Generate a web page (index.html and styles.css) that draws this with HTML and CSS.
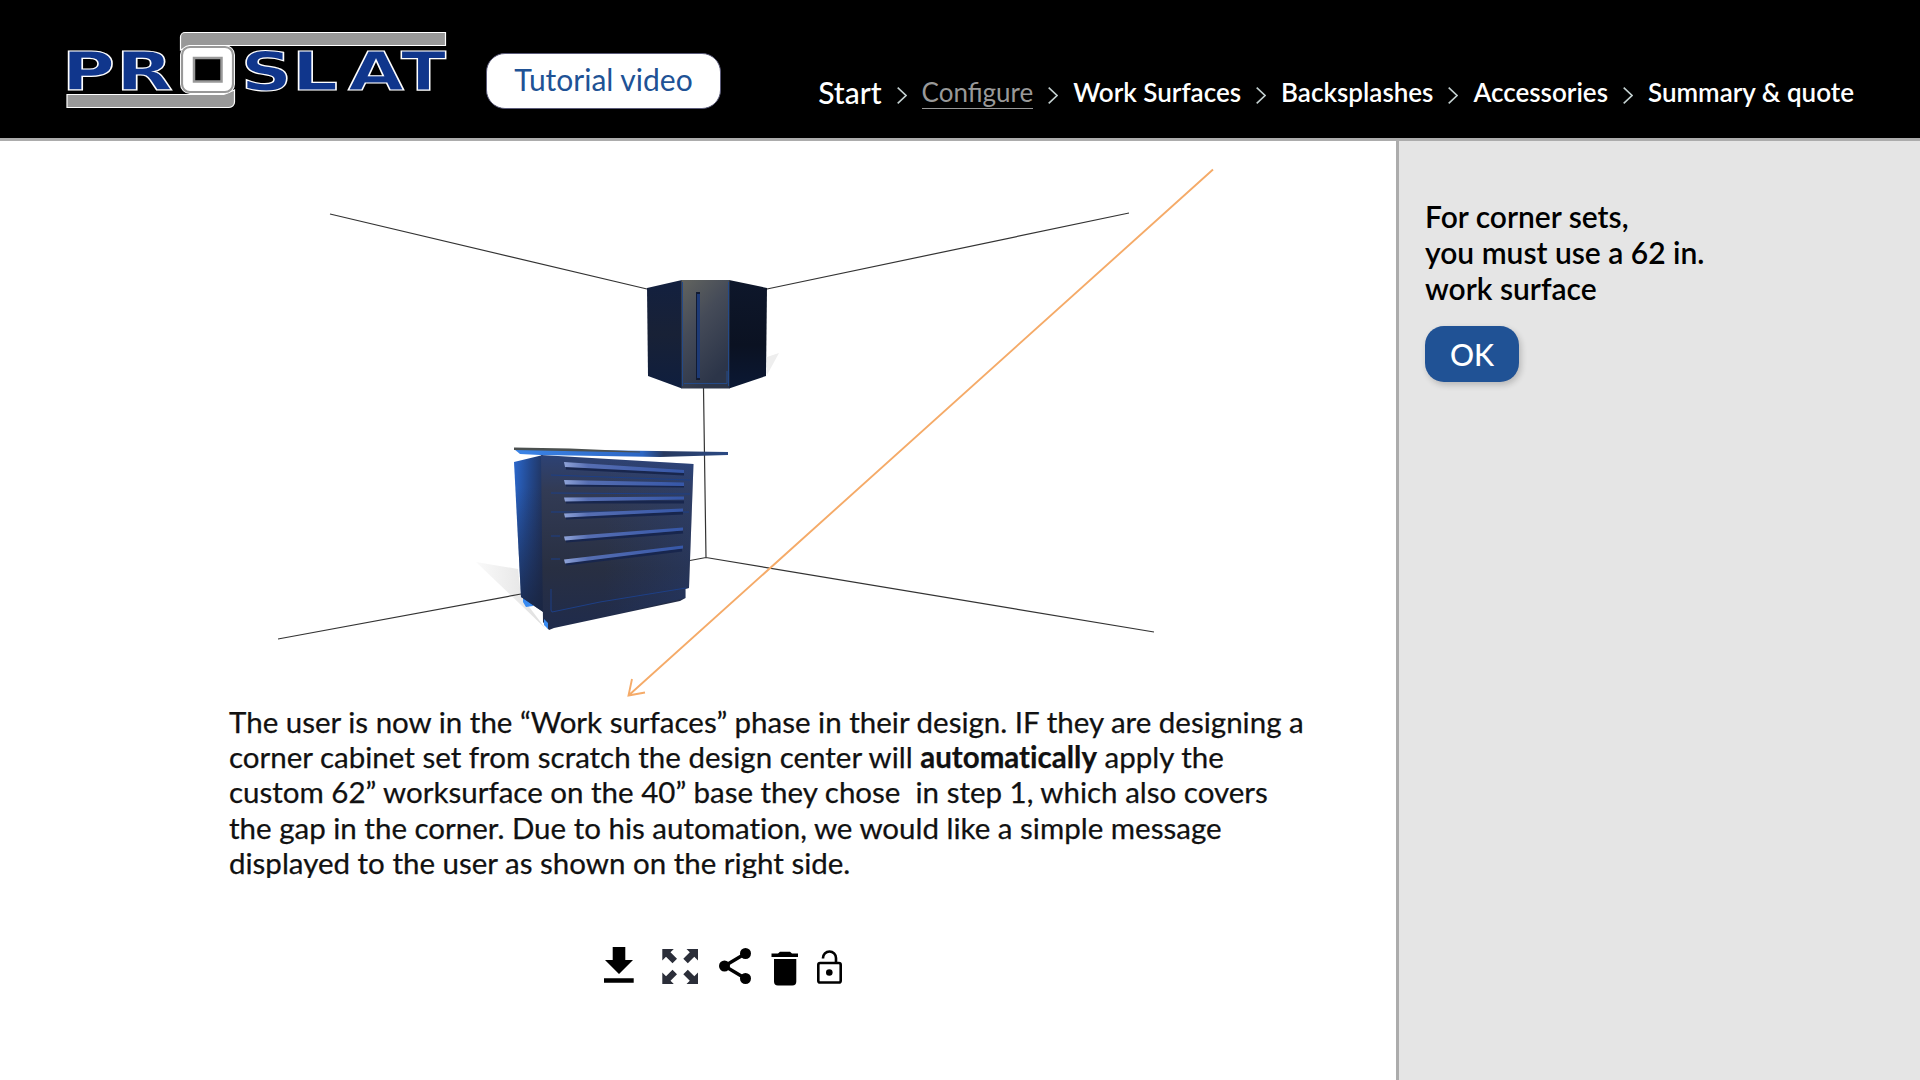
FILE: index.html
```html
<!DOCTYPE html>
<html lang="en">
<head>
<meta charset="utf-8">
<title>Proslat design center</title>
<link rel="stylesheet" href="styles.css">
</head>
<body>
<header class="header">
  <svg class="logo" viewBox="64 28 386 84" width="386" height="84" aria-label="Proslat">
    <g class="logo-bar">
      <path d="M180.500 50V37a4.500 4.500 0 0 1 4.500-4.500H445.500V45.500H190Z"/>
      <path d="M67 94.500H224L234.500 90V102a5.500 5.500 0 0 1-5.500 5.500H67Z"/>
    </g>
    <g class="logo-letters">
      <text x="62" y="90" textLength="53" lengthAdjust="spacingAndGlyphs">P</text>
      <text x="116" y="90" textLength="57" lengthAdjust="spacingAndGlyphs">R</text>
      <text x="241" y="90" textLength="51" lengthAdjust="spacingAndGlyphs">S</text>
      <text x="292" y="90" textLength="46" lengthAdjust="spacingAndGlyphs">L</text>
      <text x="348" y="90" textLength="56" lengthAdjust="spacingAndGlyphs">A</text>
      <text x="401" y="90" textLength="45" lengthAdjust="spacingAndGlyphs">T</text>
    </g>
    <rect class="logo-edge" x="180" y="45" width="55" height="49" rx="10"/>
    <rect class="logo-ring" x="182" y="47" width="51" height="45" rx="8"/>
    <rect class="logo-hole" x="194" y="58" width="27.500" height="23.500"/>
  </svg>
  <a class="tutorial">Tutorial video</a>
  <nav class="steps">
    <a class="step start">Start</a>
    <svg class="chev" viewBox="0 0 10 17"><path d="M.7.7 9 8.500.7 16.300"/></svg>
    <a class="step current">Configure</a>
    <svg class="chev" viewBox="0 0 10 17"><path d="M.7.7 9 8.500.7 16.300"/></svg>
    <a class="step">Work Surfaces</a>
    <svg class="chev" viewBox="0 0 10 17"><path d="M.7.7 9 8.500.7 16.300"/></svg>
    <a class="step">Backsplashes</a>
    <svg class="chev" viewBox="0 0 10 17"><path d="M.7.7 9 8.500.7 16.300"/></svg>
    <a class="step">Accessories</a>
    <svg class="chev" viewBox="0 0 10 17"><path d="M.7.7 9 8.500.7 16.300"/></svg>
    <a class="step">Summary &amp; quote</a>
  </nav>
</header>
<div class="body">
  <main class="stage">
    <svg class="scene" viewBox="0 141 1396 563" width="1396" height="563">
      <defs>
        <linearGradient id="side" x1="0" y1="0" x2="1" y2=".25"><stop offset="0" stop-color="#2b68cd"/><stop offset=".45" stop-color="#23498f"/><stop offset="1" stop-color="#202a48"/></linearGradient>
        <linearGradient id="sideShade" x1="0" y1="0" x2="0" y2="1"><stop offset=".2" stop-color="#1c2a50" stop-opacity="0"/><stop offset="1" stop-color="#182440" stop-opacity=".85"/></linearGradient>
        <linearGradient id="front" x1="0" y1="0" x2="0" y2="1"><stop offset="0" stop-color="#2d4275"/><stop offset=".2" stop-color="#323b55"/><stop offset=".65" stop-color="#282f42"/><stop offset="1" stop-color="#1f2b4c"/></linearGradient>
        <linearGradient id="frontBlue" x1="0" y1="0" x2="1" y2="0"><stop offset=".4" stop-color="#24489a" stop-opacity="0"/><stop offset="1" stop-color="#24489a" stop-opacity=".25"/></linearGradient>
        <linearGradient id="top" x1="0" y1="0" x2="1" y2="0"><stop offset="0" stop-color="#3c85e8"/><stop offset=".6" stop-color="#2c66c4"/><stop offset=".7" stop-color="#27395f"/><stop offset="1" stop-color="#2b4983"/></linearGradient>
        <linearGradient id="bar" x1="0" y1="0" x2="1" y2="0"><stop offset="0" stop-color="#8fa3d8"/><stop offset=".2" stop-color="#566eb2"/><stop offset="1" stop-color="#3657a8"/></linearGradient>
        <linearGradient id="door" x1="0" y1="0" x2=".5" y2="1"><stop offset="0" stop-color="#62645f"/><stop offset=".45" stop-color="#454b58"/><stop offset="1" stop-color="#2c3549"/></linearGradient>
        <linearGradient id="wallL" x1="0" y1="0" x2="0" y2="1"><stop offset="0" stop-color="#13203f"/><stop offset=".5" stop-color="#182136"/><stop offset="1" stop-color="#0f1e3e"/></linearGradient>
        <linearGradient id="wallR" x1="0" y1="0" x2="0" y2="1"><stop offset="0" stop-color="#0e172b"/><stop offset=".6" stop-color="#0b1222"/><stop offset="1" stop-color="#0b1834"/></linearGradient>
        <linearGradient id="shade" x1="1" y1="0" x2="0" y2="0"><stop offset="0" stop-color="#dedede"/><stop offset="1" stop-color="#fafafa"/></linearGradient>
      </defs>
      <path fill="url(#shade)" d="M476 562 518 569 521 596 545 628Z"/>
      <path fill="#eee" d="M767 357 779 353 767 375Z"/>
      <path class="room" d="M330 214 647 289M767 289 1129 213M703.500 388 706 557.500M690 560.500 706 557.500 1154 632M278 639 521 594"/>
      <g>
        <path fill="#388af0" d="M523 597l10 3v6l-7 1-3-5Z"/>
        <path fill="url(#side)" d="M514 462 543 455 549 616 521 597Z"/>
        <path fill="url(#sideShade)" d="M514 462 543 455 549 616 521 597Z"/>
        <path fill="url(#front)" d="M541 455 693.500 464 689 588 685.500 589V598L680 601 554 628 549 630 543 622Z"/>
        <path fill="url(#frontBlue)" d="M543 455 693.500 464 689 588 685.500 589V598L554 628Z"/>
        <path fill="#388af0" d="M544 619l4 4v6l-4-4Z"/>
        <path class="seam" d="M551 475 690 480M551 493 690 494M551 512H689M551 536H560M551 559H560M551 589V610L552 612 600 602 686 588"/>
        <path class="drop" d="M566 468 684 474M566 485 684 486M566 502H684M566 518 683 513M566 541 683 532M566 564 682 550"/>
        <g fill="url(#bar)">
          <path d="M564 462 684 470V473L565 467Z"/>
          <path d="M564 480 684 482.500V486L565 484.500Z"/>
          <path d="M564 497.500 684 496.500V499.500L565 501.500Z"/>
          <path d="M564 513.500 683 508.500V511.500L565 517.500Z"/>
          <path d="M564 536.500 683 527.500V530.500L565 540.500Z"/>
          <path d="M564 559.500 683 545.500V548.500L565 563.500Z"/>
        </g>
        <path fill="url(#top)" d="M514 449 728 452V455L660 457 540 455 520 454Z"/>
        <path fill="#4b504f" d="M514 447.500 570 448.500 640 451.500 640 452.500 514 450Z"/>
      </g>
      <g>
        <path fill="url(#wallL)" d="M647 288 682 280V388.500L648 376Z"/>
        <path fill="url(#wallR)" d="M729 280 767 288 766 376 729 388.500Z"/>
        <path fill="url(#door)" d="M681.500 280H729.500V388.500H681.500Z"/>
        <path fill="none" stroke="#244a88" stroke-width="1" d="M682.500 282V386M728.500 282V386M684 383.500H727V371"/>
        <path fill="#111b33" d="M696 292h4v88h-4Z"/>
        <path fill="#1d3a76" d="M697 294h3v84h-3Z"/>
      </g>
      <path class="arrow" d="M1213 169.500 628.500 695.500M632 679 628.500 695.500 645 692.500"/>
    </svg>
    <div class="note">
      <p>The user is now in the “Work surfaces” phase in their design. IF they are designing a<br>
      corner cabinet set from scratch the design center will <b>automatically</b> apply the<br>
      custom 62” worksurface on the 40” base they chose&nbsp; in step 1, which also covers<br>
      the gap in the corner. Due to his automation, we would like a simple message<br>
      displayed to the user as shown on the right side.</p>
    </div>
    <div class="tools">
      <svg class="download" viewBox="604 946 31 38" width="31" height="38"><path d="M612.700 947h12.600v13H633l-14 14-14-14h7.700ZM604 978.300h29.700v4.500H604Z"/></svg>
      <svg class="expand" viewBox="662 948 36 37" width="36" height="37"><path d="M662.300 949h11.500l-3.300 3.300 6.500 6.500-4.500 4.500-6.500-6.500-3.700 3.700ZM698 949h-11.500l3.300 3.300-6.500 6.500 4.500 4.500 6.500-6.500 3.700 3.700ZM662.300 984h11.500l-3.300-3.300 6.500-6.500-4.500-4.500-6.500 6.500-3.700-3.700ZM698 984h-11.500l3.300-3.300-6.500-6.500 4.500-4.500 6.500 6.500 3.700-3.700Z"/></svg>
      <svg class="share" viewBox="718 947 34 38" width="34" height="38"><path fill="none" stroke="#000" stroke-width="3.400" d="M745.500 953.500 724.500 966 745.500 978.500"/><circle cx="745.500" cy="953.500" r="5.500"/><circle cx="724.500" cy="966" r="5.500"/><circle cx="745.500" cy="978.500" r="5.500"/></svg>
      <svg class="trash" viewBox="771 950 28 36" width="28" height="36"><path d="M771.500 953.500h6.500l2-1.800h10l2 1.800h6v3.600h-26.500ZM774 959h22.300v22.500a4 4 0 0 1-4 4H778a4 4 0 0 1-4-4Z"/></svg>
      <svg class="lock" viewBox="816 949 27 36" width="27" height="36"><g fill="none" stroke="#000" stroke-width="2.600"><rect x="818.300" y="963" width="22.400" height="19.500" rx="1.800"/><path d="M823 958.500v-.5a6.500 6.500 0 0 1 13 0v5"/></g><circle cx="829.300" cy="972.500" r="3.300"/></svg>
    </div>
  </main>
  <aside class="panel">
    <p class="message">For corner sets,<br>you must use a 62 in.<br>work surface</p>
    <button class="ok">OK</button>
  </aside>
</div>
</body>
</html>
```
FILE: styles.css
```css
* { box-sizing: border-box; }
body {
  margin: 0;
  width: 1920px;
  height: 1080px;
  overflow: hidden;
  display: flex;
  flex-direction: column;
  background: #fff;
  color: #000;
  font-family: Lato, "Open Sans", sans-serif;
}
.header {
  height: 141px;
  flex: none;
  display: flex;
  align-items: flex-start;
  background: #000;
  border-bottom: 3px solid #acacac;
}
.logo { margin: 28px 0 0 64px; flex: none; overflow: visible; }
.logo-bar { fill: #999; stroke: #fff; stroke-width: 1.2; }
.logo-letters {
  font: bold 54px "DejaVu Sans", sans-serif;
  fill: #10368c;
  stroke: #fff;
  stroke-width: 1.200;
}
.logo-edge { fill: #fff; }
.logo-ring { fill: #fff; stroke: #999; stroke-width: 2.200; }
.logo-hole { fill: #000; stroke: #999; stroke-width: 2.500; }
.tutorial {
  margin: 53px 0 0 36px;
  width: 235px;
  height: 56px;
  flex: none;
  border: 1px solid #5a5a78;
  border-radius: 19px;
  background: #fff;
  color: #205295;
  font-size: 30px;
  line-height: 51px;
  text-align: center;
}
.steps {
  flex: 1;
  height: 138px;
  padding-right: 66px;
  display: flex;
  justify-content: flex-end;
  align-items: flex-start;
}
.step {
  margin-top: 76px;
  color: #fff;
  font-size: 26px;
  font-weight: 600;
  line-height: 32px;
  white-space: nowrap;
}
.start { font-size: 30px; font-weight: 500; }
.current { color: #999; font-weight: 400; border-bottom: 1px solid #999; }
.chev {
  width: 10px;
  height: 17px;
  margin: 87px 15px 0;
  fill: none;
  stroke: #c3d0d0;
  stroke-width: 1.600;
}
.body { flex: 1; display: flex; }
.stage { flex: 1; display: flex; flex-direction: column; }
.scene { flex: none; display: block; }
.room { fill: none; stroke: #333; stroke-width: 1.200; }
.seam { fill: none; stroke: #1d3f86; stroke-width: 1; }
.drop { fill: none; stroke: #18264d; stroke-width: 3; }
.arrow { fill: none; stroke: #f5ab69; stroke-width: 1.900; }
.note {
  height: 174px;
  padding-left: 229px;
  overflow: hidden;
  flex: none;
}
.note p {
  margin: 0;
  font-size: 29.500px;
  font-variant-ligatures: none;
  line-height: 35.200px;
  white-space: nowrap;
  color: #111;
  -webkit-text-stroke: .25px #111;
}
.tools {
  margin: 68px 0 0 604px;
  display: flex;
  align-items: flex-start;
}
.expand { fill: #2b2e39; margin: 2px 0 0 27px; }
.share { margin: 1px 0 0 20px; }
.trash { margin: 4px 0 0 19px; }
.lock { margin: 3px 0 0 17px; }
.panel {
  width: 524px;
  padding: 57px 0 0 26px;
  border-left: 3px solid #acacac;
  background: #e5e5e5;
}
.message {
  margin: 0 0 20px;
  font-size: 30px;
  font-weight: 600;
  line-height: 36px;
}
.ok {
  display: block;
  width: 94px;
  height: 56px;
  padding: 0;
  border: 0;
  border-radius: 19px;
  background: #205295;
  color: #fff;
  box-shadow: 2px 3px 6px rgba(0, 0, 0, .2);
  font: 500 30px Lato, sans-serif;
}
```
